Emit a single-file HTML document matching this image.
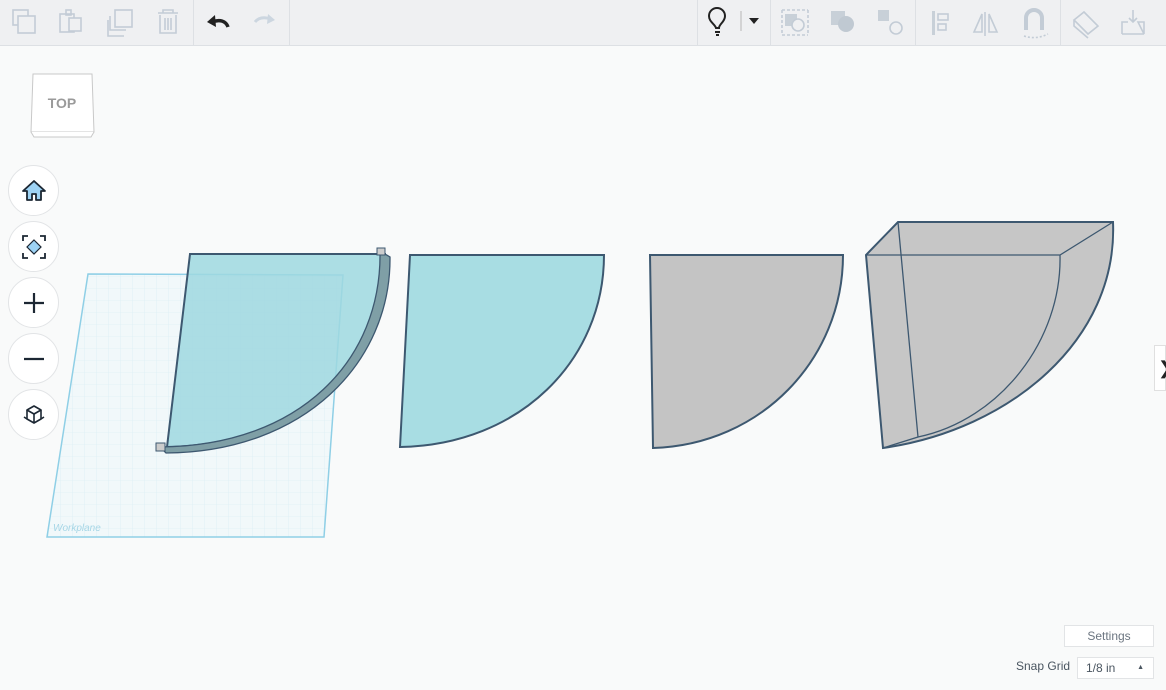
<!DOCTYPE html>
<html><head><meta charset="utf-8"><style>
html,body{margin:0;padding:0;width:1166px;height:690px;overflow:hidden;background:#f9fafa;font-family:"Liberation Sans",sans-serif}
.tb{position:absolute;left:0;top:0;width:1166px;height:45px;background:#eff0f2;border-bottom:1px solid #dde0e4}
.sep{position:absolute;top:0;width:1px;height:45px;background:#dde0e4}
.nav{position:absolute;left:8px;width:51px;height:51px;border-radius:50%;background:#fff;border:1px solid #e2e4e6;box-sizing:border-box}
.nav svg{position:absolute;left:12px;top:12px}
.btn{position:absolute;background:#fff;border:1px solid #e2e4e6;box-sizing:border-box;color:#6b7580;font-size:12px}
</style></head><body>
<div class="tb">
<svg width="1166" height="45" style="position:absolute;left:0;top:0" fill="none" stroke-width="1.6">
 <g stroke="#c3ccd6">
  <rect x="13" y="10" width="15" height="15"/><rect x="18" y="16" width="17" height="17" fill="#eff0f2"/>
  <rect x="60" y="14" width="14" height="18"/><rect x="66" y="10" width="5" height="5"/><rect x="69" y="18" width="12" height="13" fill="#eff0f2"/>
  <rect x="115" y="10" width="17" height="17"/><path d="M110 16v14h16M108 20v16h16"/>
  <path d="M158 13h20M163 13v-3h10v3M160 15v18h16v-18M165 18v12M168 18v12M171 18v12"/>
 </g>
 <path d="M255 22c4-5 10-5 16-3" stroke="#ccd6e0" stroke-width="3"/><path d="M268 14l7 6-8 4z" fill="#ccd6e0"/>
 <path d="M228 27c-2-6-8-8-16-5" stroke="#222" stroke-width="3.5"/><path d="M215 15l-8 7 9 5z" fill="#222"/>
 <g stroke="#222" stroke-width="2"><path d="M716 28c-1-4-7-6-7-12a8 8 0 0 1 16 0c0 6-6 8-6 12z"/><path d="M715 32h5M716 35h3"/></g>
 <path d="M749 18h10l-5 6z" fill="#222"/>
 <line x1="741" y1="11" x2="741" y2="31" stroke="#ccc"/>
 <g stroke="#c3ccd6" fill="#c8d0d8">
  <rect x="785" y="14" width="12" height="12" stroke="none"/><circle cx="798" cy="25" r="6" fill="#eff0f2"/><path d="M782 10h26M782 35h26M782 10v25M808 10v25" stroke-dasharray="3 2" fill="none"/>
  <rect x="831" y="11" width="14" height="14" stroke="none"/><circle cx="846" cy="24" r="8" stroke="none" fill="#c0c9d2"/>
  <rect x="878" y="10" width="11" height="11" stroke="none"/><circle cx="896" cy="28" r="6" fill="none"/>
  <rect x="932" y="11" width="3" height="24" stroke="none"/><rect x="938" y="14" width="10" height="6" fill="none"/><rect x="938" y="24" width="8" height="6" fill="none"/>
  <path d="M985 12v24" fill="none"/><path d="M982 14l-8 18h8z M989 14l8 18h-8z" fill="none"/>
  <path d="M1026 30v-12a8 8 0 0 1 16 0v12" fill="none" stroke-width="4"/><path d="M1024 36q12 4 24-2" fill="none" stroke-dasharray="2 2"/>
  <path d="M1074 20l10-8 14 14-10 8z M1074 20v6l14 12" fill="none"/>
  <path d="M1122 34v-12h6M1138 22h6v12zM1122 34h22M1133 10v12M1129 18l4 4 4-4" fill="none"/>
 </g>
</svg>
<div class="sep" style="left:193px"></div><div class="sep" style="left:289px"></div>
<div class="sep" style="left:697px"></div><div class="sep" style="left:770px"></div><div class="sep" style="left:915px"></div><div class="sep" style="left:1060px"></div>
</div>

<svg width="70" height="75" style="position:absolute;left:28px;top:70px">
 <path d="M5 4h59l2 58H3z" fill="#fff" stroke="#c8c8c8"/>
 <path d="M3 62l3 5h57l3-5" fill="#fff" stroke="#c8c8c8"/>
 <text x="34" y="38" text-anchor="middle" font-size="14" font-weight="bold" fill="#9a9a9a" font-family="Liberation Sans">TOP</text>
</svg>

<div class="nav" style="top:165px"><svg width="26" height="26"><path d="M13 3L2 13h4v9h5v-6h4v6h5v-9h4z" fill="#9dd3f5" stroke="#1c2733" stroke-width="1.8" stroke-linejoin="round"/></svg></div>
<div class="nav" style="top:221px"><svg width="26" height="26" fill="none" stroke="#1c2733" stroke-width="1.8"><path d="M2 7V2h5M19 2h5v5M24 19v5h-5M7 24H2v-5"/><path d="M13 6l7 7-7 7-7-7z" fill="#9dd3f5" stroke-width="1.2"/></svg></div>
<div class="nav" style="top:277px"><svg width="26" height="26" stroke="#1c2733" stroke-width="2.2"><path d="M13 3v20M3 13h20"/></svg></div>
<div class="nav" style="top:333px"><svg width="26" height="26" stroke="#1c2733" stroke-width="2.2"><path d="M3 13h20"/></svg></div>
<div class="nav" style="top:389px"><svg width="26" height="26" fill="none" stroke="#1c2733" stroke-width="1.6" stroke-linejoin="round"><path d="M6 8l7-4 7 4-7 4z" fill="#fff"/><path d="M6 8v9l7 4v-9M20 8v9l-7 4"/><path d="M3 15l3 2M23 15l-3 2"/></svg></div>

<svg width="1166" height="690" style="position:absolute;left:0;top:0">
 <defs>
  <pattern id="g" width="12" height="12" patternUnits="userSpaceOnUse"><path d="M12 0H0V12" fill="none" stroke="#d6ecf3" stroke-width="0.6"/></pattern>
 </defs>
 <path d="M88 274L343 275L324 537L47 537Z" fill="#f1f8fa"/>
 <path d="M88 274L343 275L324 537L47 537Z" fill="url(#g)" stroke="#8fcfe6" stroke-width="1.5"/>
 <text x="53" y="531" font-size="10" font-style="italic" fill="#a6d6e6">Workplane</text>
 <!-- shape 1 -->
 <path d="M190 254H385C385 360 300 445 167 447Z" fill="#9fd8df" fill-opacity="0.85" stroke="#3d5870" stroke-width="2"/>
 <path d="M380 251L390 257C391 362 305 452 166 453L160 447C300 446 382 360 380 251Z" fill="#7f9fa6" stroke="#3d5870" stroke-width="1.3"/>
 <path d="M156 443h9v8h-9z" fill="#ccc" stroke="#3d5870"/><path d="M377 248h8v7h-8z" fill="#ccc" stroke="#3d5870"/>
 <!-- shape 2 -->
 <path d="M410 255H604C604 360 520 445 400 447Z" fill="#a8dde3" stroke="#3d5870" stroke-width="2"/>
 <!-- shape 3 -->
 <path d="M650 255H843C843 360 760 445 653 448Z" fill="#c4c4c4" stroke="#3d5870" stroke-width="2"/>
 <!-- shape 4 -->
 <path d="M898 222H1113C1118 340 1010 430 883 448L866 255Z" fill="#c6c6c6" stroke="#3d5870" stroke-width="2"/>
 <g fill="none" stroke="#3d5870" stroke-width="1.3">
  <path d="M866 255H1060L1113 222M898 222L918 437L883 448M1060 255C1062 340 1000 420 918 437M866 255L898 222"/>
 </g>
</svg>

<div style="position:absolute;left:1154px;top:345px;width:12px;height:46px;background:#fff;border:1px solid #e0e0e0;box-sizing:border-box;font-size:18px;line-height:44px;color:#222;padding-left:3px">&#x276F;</div>

<div class="btn" style="left:1064px;top:625px;width:90px;height:22px;text-align:center;line-height:20px">Settings</div>
<div style="position:absolute;left:1016px;top:659px;font-size:12px;color:#4a5560">Snap Grid</div>
<div class="btn" style="left:1077px;top:657px;width:77px;height:22px;line-height:20px;padding-left:8px;color:#4a5560">1/8 in<span style="position:absolute;right:9px;top:0;font-size:7px">&#9650;</span></div>
</body></html>
